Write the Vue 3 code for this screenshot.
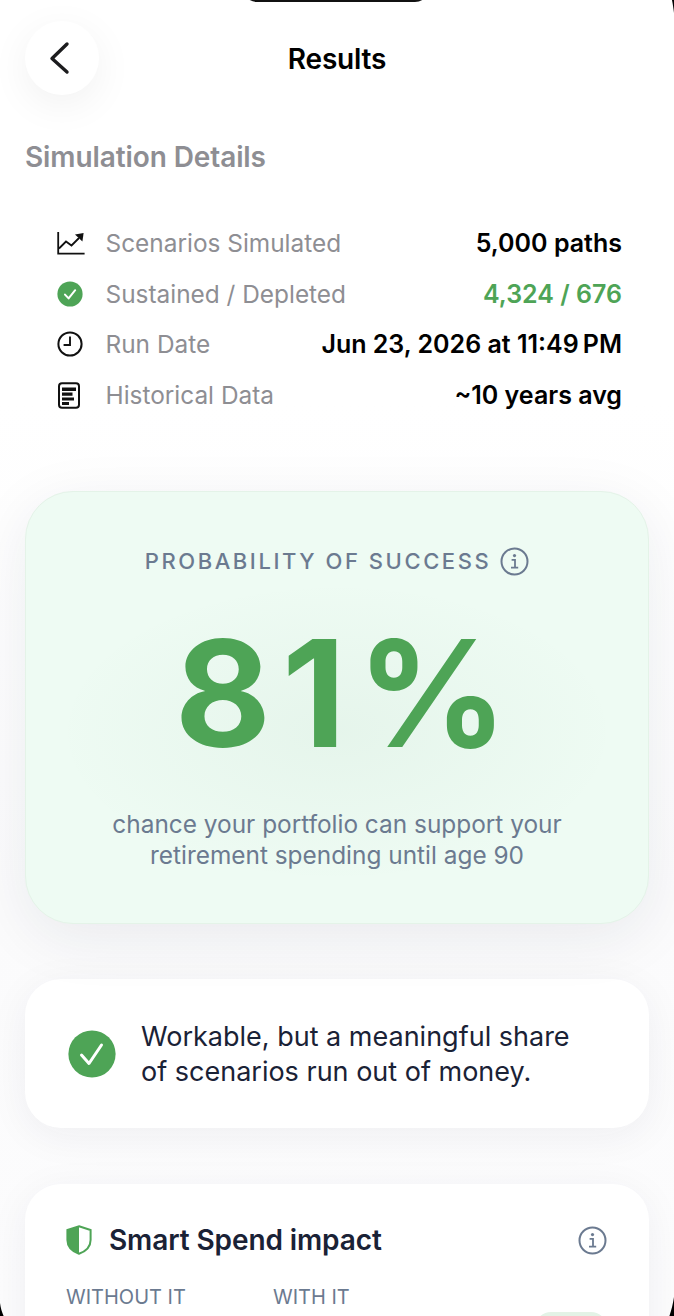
<template>
  <div class="screen">
    <header class="topbar">
      <button type="button" class="back" aria-label="Back">
        <svg width="24" height="34" viewBox="0 0 24 34" fill="none">
          <path d="M19 3 L4 17.5 L19 31" stroke="#1c1c1e" stroke-width="3.4" stroke-linecap="round" stroke-linejoin="round" />
        </svg>
      </button>
      <h1>Results</h1>
    </header>

    <h2 class="section-title">Simulation Details</h2>

    <ul class="details">
      <li v-for="row in rows" :key="row.label">
        <span class="row-icon">
          <svg v-if="row.icon === 'chart'" width="28" height="24" viewBox="0 0 28 24" fill="none">
            <path d="M1.2 1v21.6H27.6" stroke="#111" stroke-width="1.8" />
            <path d="M2 17.5 L9 10.5 L14.5 14.5 L22 7" stroke="#111" stroke-width="1.8" />
            <path d="M18 3.6 L26.6 2 L25.4 10.6 Z" fill="#111" />
          </svg>
          <svg v-else-if="row.icon === 'check'" width="26" height="26" viewBox="0 0 26 26">
            <circle cx="13" cy="13" r="12.6" fill="#4ea456" />
            <path d="M8 13.6 L11.6 17.4 L18.2 9.2" fill="none" stroke="#fff" stroke-width="2" stroke-linecap="round" stroke-linejoin="round" />
          </svg>
          <svg v-else-if="row.icon === 'clock'" width="26" height="26" viewBox="0 0 26 26" fill="none">
            <circle cx="13" cy="13" r="11.6" stroke="#111" stroke-width="2" />
            <path d="M13 5.6 V14 H6.6" stroke="#111" stroke-width="1.9" />
          </svg>
          <svg v-else width="24" height="27" viewBox="0 0 24 27" fill="none">
            <rect x="2" y="1.2" width="20" height="24.6" rx="3" stroke="#111" stroke-width="2" />
            <path d="M5 5.4h14v3.6H5zM5 10.6h10.5v3.2H5zM5 15.4h12v3H5zM5 20h7v3H5z" fill="#111" />
          </svg>
        </span>
        <span class="row-label">{{ row.label }}</span>
        <span class="row-value" :class="{ good: row.good }">{{ row.value }}</span>
      </li>
    </ul>

    <section class="prob-card">
      <div class="prob-glow" aria-hidden="true"></div>
      <p class="prob-head">
        <span>PROBABILITY OF SUCCESS</span>
        <svg class="info" width="29" height="29" viewBox="0 0 29 29" fill="none">
          <circle cx="14.5" cy="14.5" r="13" stroke="currentColor" stroke-width="2" />
          <circle cx="14.5" cy="8.6" r="1.6" fill="currentColor" />
          <path d="M11.6 12.8h3.4v7.4M11 20.6h7.2" stroke="currentColor" stroke-width="1.8" />
        </svg>
      </p>
      <p class="prob-value">81%</p>
      <p class="prob-sub">chance your portfolio can support your<br />retirement spending until age 90</p>
    </section>

    <section class="verdict-card">
      <svg class="verdict-icon" width="48" height="48" viewBox="0 0 48 48">
        <circle cx="24" cy="24" r="23.6" fill="#4ea456" />
        <path d="M13.5 25 L21 33.5 L33.5 15" fill="none" stroke="#fff" stroke-width="3" stroke-linecap="round" stroke-linejoin="round" />
      </svg>
      <p>Workable, but a meaningful share<br />of scenarios run out of money.</p>
    </section>

    <section class="impact-card">
      <div class="impact-head">
        <svg width="26" height="30" viewBox="0 0 26 30" fill="none">
          <path d="M13 1.2 L24.6 5 V15 C24.6 22 19 26.6 13 28.8 C7 26.6 1.4 22 1.4 15 V5 Z" fill="#fff" stroke="#4ea456" stroke-width="2" />
          <path d="M13 1.2 L1.4 5 V15 C1.4 22 7 26.6 13 28.8 Z" fill="#4ea456" />
        </svg>
        <h3>Smart Spend impact</h3>
        <svg class="info impact-info" width="29" height="29" viewBox="0 0 29 29" fill="none">
          <circle cx="14.5" cy="14.5" r="13" stroke="currentColor" stroke-width="2" />
          <circle cx="14.5" cy="8.6" r="1.6" fill="currentColor" />
          <path d="M11.6 12.8h3.4v7.4M11 20.6h7.2" stroke="currentColor" stroke-width="1.8" />
        </svg>
      </div>
      <div class="impact-cols">
        <span class="col-a">WITHOUT IT</span>
        <span>WITH IT</span>
      </div>
      <div class="impact-pill" aria-hidden="true"></div>
    </section>

    <div class="notch" aria-hidden="true"></div>
    <svg class="corners" width="674" height="1316" viewBox="0 0 674 1316" aria-hidden="true">
      <path d="M672 0 H674 V13 C673.4 8 672.8 4 672 0 Z" fill="#000" />
      <path d="M0 1303 C0.6 1308 2 1312 3.6 1316 H0 Z" fill="#000" />
      <path d="M674 1297 C673 1304 671.4 1310 669.4 1316 H674 Z" fill="#000" />
    </svg>
  </div>
</template>

<script setup>
const rows = [
  { icon: 'chart', label: 'Scenarios Simulated', value: '5,000 paths' },
  { icon: 'check', label: 'Sustained / Depleted', value: '4,324 / 676', good: true },
  { icon: 'clock', label: 'Run Date', value: 'Jun 23, 2026 at 11:49\u202fPM' },
  { icon: 'doc', label: 'Historical Data', value: '~10 years avg' },
]
</script>

<style>
html,
body {
  background: #fff;
  overflow: hidden;
}
</style>

<style scoped>
.screen {
  position: relative;
  width: 674px;
  height: 1316px;
  overflow: hidden;
  padding: 21px 25px 0;
  box-sizing: border-box;
  background: linear-gradient(180deg, #fff 0, #fff 400px, #fbfbfc 900px, #fcfcfd 100%);
  font-family: Inter, "Liberation Sans", sans-serif;
  color: #111;
}

.topbar {
  position: relative;
  height: 74px;
  display: flex;
  align-items: center;
  justify-content: center;
}

.back {
  position: absolute;
  left: 0;
  top: 0;
  width: 74px;
  height: 74px;
  border: none;
  border-radius: 50%;
  background: #fff;
  box-shadow: 0 10px 40px rgba(0, 0, 0, 0.06);
  display: grid;
  place-items: center;
  padding: 0 4px 0 0;
}

h1 {
  margin: 2px 0 0;
  font-size: 28px;
  font-weight: 600;
  letter-spacing: -0.2px;
  color: #000;
}

.section-title {
  margin: 45px 0 0;
  font-size: 28px;
  line-height: 34px;
  font-weight: 600;
  color: #8e8e93;
  letter-spacing: -0.1px;
}

.details {
  list-style: none;
  margin: 44px 0 0;
  padding: 0 27px 0 32px;
}

.details li {
  height: 50.6px;
  display: flex;
  align-items: center;
}

.row-icon {
  width: 48.5px;
  flex: none;
  display: flex;
  align-items: center;
}

.row-label {
  font-size: 24.4px;
  color: #8e8e93;
}

.row-value {
  margin-left: auto;
  font-size: 25px;
  font-weight: 600;
  color: #000;
}

.row-value.good {
  color: #4ea456;
}

.prob-card {
  position: relative;
  margin-top: 71px;
  height: 433px;
  box-sizing: border-box;
  border: 1px solid #e4f3e8;
  border-radius: 48px;
  background: #eefbf3;
  box-shadow: 0 14px 60px rgba(30, 41, 70, 0.08);
  text-align: center;
  overflow: hidden;
}

.prob-glow {
  position: absolute;
  left: 50%;
  top: 240px;
  width: 560px;
  height: 300px;
  transform: translate(-50%, -50%);
  background: radial-gradient(closest-side, rgba(70, 130, 90, 0.05), rgba(70, 130, 90, 0));
}

.prob-head {
  position: relative;
  margin: 54px 0 0;
  display: flex;
  align-items: center;
  justify-content: center;
  gap: 9px;
  color: #6b7a90;
  font-size: 22px;
  line-height: 30px;
  font-weight: 500;
  letter-spacing: 2.55px;
}

.prob-value {
  position: relative;
  margin: 26px 0 0;
  padding-left: 19px;
  font-size: 148px;
  line-height: 184px;
  font-weight: 700;
  letter-spacing: 11px;
  color: #4ea456;
}

.prob-sub {
  position: relative;
  margin: 23px 0 0;
  font-size: 24.4px;
  line-height: 31px;
  color: #6b7a90;
}

.verdict-card {
  margin-top: 55px;
  height: 149px;
  box-sizing: border-box;
  border-radius: 36px;
  background: #fff;
  box-shadow: 0 8px 40px rgba(30, 41, 70, 0.06);
  display: flex;
  align-items: center;
  gap: 25px;
  padding: 0 43px;
}

.verdict-icon {
  flex: none;
}

.verdict-card p {
  margin: 0;
  font-size: 27px;
  line-height: 35px;
  color: #1a2236;
}

.impact-card {
  position: relative;
  margin-top: 56px;
  height: 300px;
  box-sizing: border-box;
  border-radius: 36px;
  background: #fff;
  box-shadow: 0 8px 40px rgba(30, 41, 70, 0.06);
  padding: 39px 41px 0;
}

.impact-head {
  display: flex;
  align-items: center;
  gap: 17px;
  height: 34px;
}

.impact-head h3 {
  margin: 0;
  font-size: 28px;
  font-weight: 600;
  letter-spacing: -0.1px;
  color: #1a2236;
}

.info {
  color: #6b7a90;
  flex: none;
}

.impact-info {
  margin-left: auto;
  margin-right: 1px;
}

.impact-cols {
  margin-top: 27px;
  display: flex;
  font-size: 20px;
  line-height: 26px;
  color: #6b7a90;
}

.col-a {
  width: 207px;
}

.impact-pill {
  position: absolute;
  left: 510px;
  top: 128px;
  width: 72px;
  height: 40px;
  border-radius: 16px;
  background: #e3f3e6;
}

.notch {
  position: absolute;
  left: 243px;
  top: -30px;
  width: 186px;
  height: 32px;
  border-radius: 0 0 14px 14px;
  background: #111;
}

.corners {
  position: absolute;
  left: 0;
  top: 0;
  pointer-events: none;
}
</style>
